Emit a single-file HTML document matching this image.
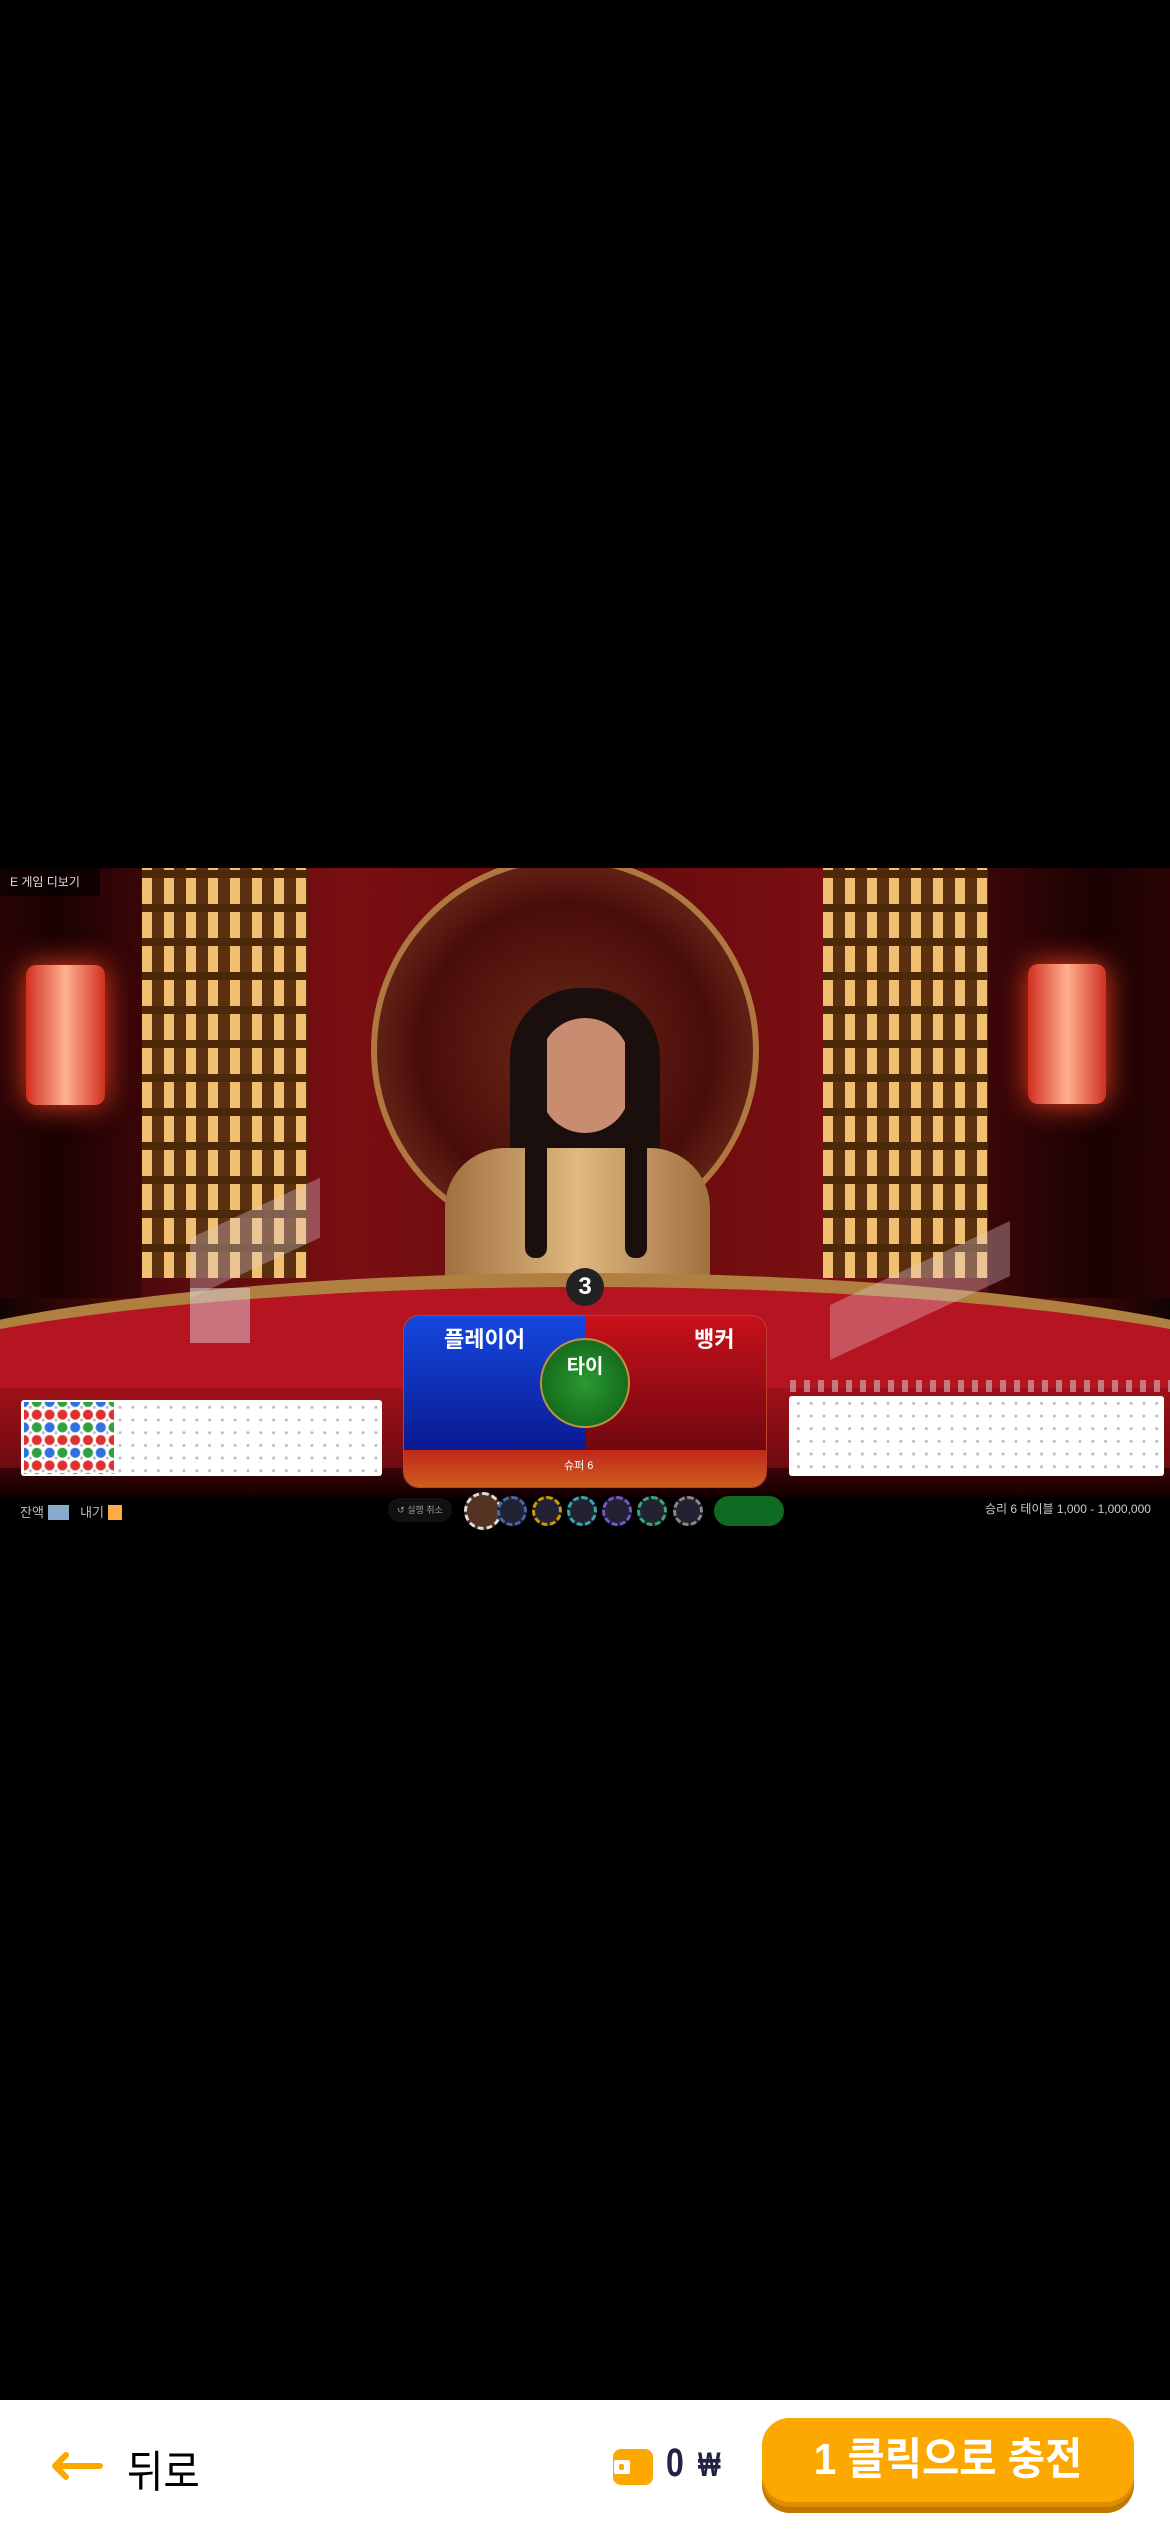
<!DOCTYPE html>
<html><head><meta charset="utf-8">
<style>
*{margin:0;padding:0;box-sizing:border-box}
body{width:1170px;height:2532px;background:#000;position:relative;overflow:hidden;font-family:"Liberation Sans","Noto Sans CJK KR",sans-serif}
.a{position:absolute}
.dots{background-color:#fff;background-image:radial-gradient(circle,#bbb 1.2px,transparent 1.8px);background-size:12.8px 12.7px;background-position:3px 1px}
.chip{position:absolute;top:1496px;width:30px;height:30px;border-radius:50%;border:3px dashed #999;background:#223}
</style></head><body>
<div class="a" style="left:0;top:868px;width:1170px;height:662px;background:linear-gradient(90deg,#120303 0%,#4a080a 10%,#7a0f12 30%,#620a0d 50%,#7a0f12 70%,#4a080a 90%,#120303 100%);overflow:hidden">
 <div class="a" style="left:0;top:0;width:142px;height:430px;background:linear-gradient(90deg,#2a0405,#1a0203 40%,#3a0608)"></div>
 <div class="a" style="left:988px;top:0;width:182px;height:430px;background:linear-gradient(90deg,#3a0608,#1a0203 60%,#2a0405)"></div>
 <div class="a" style="left:142px;top:0;width:165px;height:410px;background:repeating-linear-gradient(90deg,#f0c070 0 10px,#5a3010 10px 22px),#c08040"></div>
 <div class="a" style="left:142px;top:0;width:165px;height:410px;background:repeating-linear-gradient(0deg,transparent 0 26px,#4a2808 26px 34px)"></div>
 <div class="a" style="left:823px;top:0;width:165px;height:410px;background:repeating-linear-gradient(90deg,#f0c070 0 10px,#5a3010 10px 22px),#c08040"></div>
 <div class="a" style="left:823px;top:0;width:165px;height:410px;background:repeating-linear-gradient(0deg,transparent 0 26px,#4a2808 26px 34px)"></div>
 <div class="a" style="left:371px;top:-12px;width:388px;height:388px;border-radius:50%;border:6px solid #b07840;background:radial-gradient(circle,#6a2a18 0,#4a0c0a 55%,#8a4a28 100%)"></div>
 <div class="a" style="left:26px;top:97px;width:79px;height:140px;border-radius:10px;background:linear-gradient(90deg,#d03020,#ffb090 50%,#d03020);box-shadow:0 0 30px #f04020"></div>
 <div class="a" style="left:1028px;top:96px;width:78px;height:140px;border-radius:10px;background:linear-gradient(90deg,#d03020,#ffb090 50%,#d03020);box-shadow:0 0 30px #f04020"></div>
 <div class="a" style="left:510px;top:120px;width:150px;height:300px;border-radius:70px 70px 10px 10px;background:#1a0f0c"></div>
 <div class="a" style="left:445px;top:280px;width:265px;height:160px;border-radius:60px 60px 0 0;background:linear-gradient(90deg,#a07040,#e0b880 50%,#a07040)"></div>
 <div class="a" style="left:540px;top:150px;width:90px;height:115px;border-radius:45px;background:#c88c70"></div>
 <div class="a" style="left:525px;top:160px;width:22px;height:230px;background:#1a0f0c;border-radius:10px"></div>
 <div class="a" style="left:625px;top:160px;width:22px;height:230px;background:#1a0f0c;border-radius:10px"></div>
 <div class="a" style="left:-200px;top:405px;width:1570px;height:400px;border-radius:50% 50% 0 0/35% 35% 0 0;background:#b51520;border-top:14px solid #b08040"></div>
 <div class="a" style="left:0;top:520px;width:1170px;height:100px;background:linear-gradient(#a01018,#600a0e)"></div>
 <div class="a" style="left:0;top:600px;width:1170px;height:30px;background:linear-gradient(#3a0508,#120000)"></div>
 <div class="a" style="left:190px;top:340px;width:130px;height:60px;background:rgba(230,200,210,.35);transform:skewY(-25deg)"></div>
 <div class="a" style="left:190px;top:420px;width:60px;height:55px;background:rgba(220,210,220,.5)"></div>
 <div class="a" style="left:830px;top:395px;width:180px;height:55px;background:rgba(230,200,210,.35);transform:skewY(-25deg)"></div>
 <div class="a" style="left:566px;top:400px;width:38px;height:38px;border-radius:50%;background:#222;color:#fff;font-weight:bold;font-size:24px;text-align:center;line-height:38px">3</div>
 <div class="a" style="left:0;top:0;width:100px;height:28px;background:rgba(0,0,0,.6);color:#ddd;font-size:12px;line-height:28px;padding-left:10px">E 게임 디보기</div>
 <div class="a" style="left:0;top:629px;width:1170px;height:33px;background:#000"></div>
</div>
<div class="a dots" style="left:21px;top:1400px;width:361px;height:76px;border-radius:3px"></div>
<div class="a" style="left:24px;top:1402px;width:90px;height:72px;background-image:radial-gradient(circle,#e03030 4.5px,transparent 5.5px),radial-gradient(circle,#3070e0 4.5px,transparent 5.5px),radial-gradient(circle,#e03030 4.5px,transparent 5.5px),radial-gradient(circle,#30a040 4.5px,transparent 5.5px);background-size:25.6px 25.4px;background-position:0 0,12.8px 12.7px,12.8px 0,0 12.7px"></div>
<div class="a dots" style="left:789px;top:1396px;width:375px;height:80px;border-radius:3px"></div>
<div class="a" style="left:790px;top:1380px;width:380px;height:12px;background:repeating-linear-gradient(90deg,#ddd 0 6px,transparent 6px 14px);opacity:.5"></div>
<div class="a" style="left:403px;top:1315px;width:364px;height:173px;border-radius:16px;overflow:hidden;border:1px solid #c04030">
 <div class="a" style="left:0;top:0;width:182px;height:134px;background:linear-gradient(#1548e0,#0a1a90)"></div>
 <div class="a" style="left:182px;top:0;width:182px;height:134px;background:linear-gradient(#c8101a,#700810)"></div>
 <div class="a" style="left:0;top:134px;width:364px;height:39px;background:linear-gradient(#c02818,#d06020)"></div>
 <div class="a" style="left:40px;top:6px;color:#fff;font-weight:bold;font-size:22px">플레이어</div>
 <div class="a" style="left:290px;top:6px;color:#fff;font-weight:bold;font-size:22px">뱅커</div>
 <div class="a" style="left:160px;top:141px;color:#fff;font-size:11px">슈퍼 6</div>
</div>
<div class="a" style="left:540px;top:1338px;width:90px;height:90px;border-radius:50%;background:radial-gradient(#2a9a30,#0c5a14);border:2px solid #c09040;color:#fff;font-weight:bold;font-size:20px;text-align:center;padding-top:10px">타이</div>
<div class="a" style="left:20px;top:1502px;color:#bbb;font-size:13px">잔액 <span style="background:#8ac;color:#8ac">000</span> &nbsp; 내기 <span style="background:#fa4;color:#fa4">00</span></div>
<div class="a" style="left:388px;top:1498px;width:64px;height:24px;border-radius:12px;background:#111;color:#999;font-size:9px;line-height:24px;text-align:center">↺ 실행 취소</div>
<div class="chip" style="left:464px;top:1492px;width:38px;height:38px;border-color:#ddd;background:#532"></div>
<div class="chip" style="left:497px;border-color:#46a"></div>
<div class="chip" style="left:532px;border-color:#c90"></div>
<div class="chip" style="left:567px;border-color:#3aa"></div>
<div class="chip" style="left:602px;border-color:#75c"></div>
<div class="chip" style="left:637px;border-color:#3a7"></div>
<div class="chip" style="left:673px;border-color:#888"></div>
<div class="a" style="left:714px;top:1496px;width:70px;height:30px;border-radius:15px;background:#0f6a22"></div>
<div class="a" style="left:985px;top:1500px;color:#ccc;font-size:12px">승리 6 테이블 1,000 - 1,000,000</div>
<div class="a" style="left:0;top:2400px;width:1170px;height:132px;background:#fff"></div>
<svg class="a" style="left:50px;top:2452px" width="54" height="28" viewBox="0 0 54 28"><path d="M50 14H6M16 3L5 14L16 25" stroke="#fca800" stroke-width="6" fill="none" stroke-linecap="round" stroke-linejoin="round"/></svg>
<div class="a" style="left:127px;top:2436px;font-size:44px;color:#000;transform:scaleX(.9);transform-origin:left">뒤로</div>
<div class="a" style="left:613px;top:2449px;width:40px;height:36px;border-radius:8px;background:#fca800"></div>
<div class="a" style="left:614px;top:2460px;width:16px;height:14px;background:#fff;border-radius:2px"></div>
<div class="a" style="left:619px;top:2464px;width:5px;height:6px;background:#fca800;border-radius:2px"></div>
<div class="a" style="left:666px;top:2441px;font-size:40px;font-weight:bold;color:#222244;transform:scaleX(.8);transform-origin:left">0</div>
<div class="a" style="left:698px;top:2446px;font-size:34px;font-weight:bold;color:#222244;transform:scaleX(.7);transform-origin:left">₩</div>
<div class="a" style="left:762px;top:2418px;width:372px;height:95px;border-radius:28px;background:#c07800"></div>
<div class="a" style="left:762px;top:2418px;width:372px;height:89px;border-radius:28px;background:#e08e00"></div>
<div class="a" style="left:762px;top:2418px;width:372px;height:84px;border-radius:28px;background:#fca800"></div>
<div class="a" style="left:762px;top:2418px;width:372px;height:84px;color:#fff;font-weight:bold;font-size:44px;text-align:center;line-height:84px;transform:scaleX(.92)">1 클릭으로 충전</div>
</body></html>
